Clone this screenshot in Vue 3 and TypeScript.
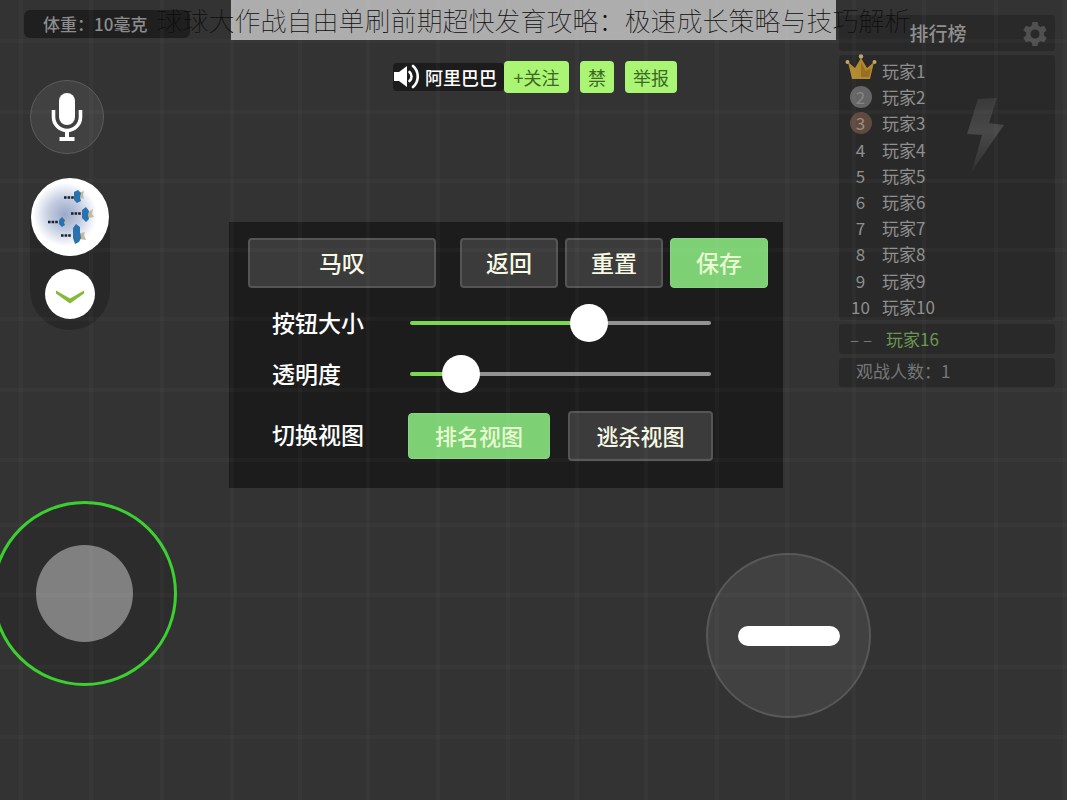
<script setup lang="ts">
import { ref } from 'vue'

interface Player {
  rank: number
  name: string
}

const verticalLines: number[] = [21, 91, 162, 232, 300, 368, 438, 508, 577, 646, 717, 787, 854, 924, 996, 1065]
const horizontalLines: number[] = [41, 112, 181, 250, 319, 390, 460, 525, 595, 667, 737]

const players: Player[] = Array.from({ length: 10 }, (_, i) => ({ rank: i + 1, name: `玩家${i + 1}` }))

const buttonSize = ref<number>(61)
const opacity = ref<number>(12)
const view = ref<'rank' | 'chase'>('rank')
</script>

<template>
  <div class="game">
    <svg class="grid-lines" aria-hidden="true">
      <line v-for="x in verticalLines" :key="`v${x}`" :x1="x" y1="0" :x2="x" y2="100%" />
      <line v-for="y in horizontalLines" :key="`h${y}`" x1="0" :y1="y" x2="100%" :y2="y" />
    </svg>

    <h1 class="title"><span>球球大作战自由单刷前期超快发育攻略：极速成长策略与技巧解析</span></h1>

    <div class="hud">
      <div class="left">
        <div class="weight">体重：10毫克</div>
        <button class="mic" type="button" aria-label="麦克风">
          <svg width="32" height="50" viewBox="0 0 32 50">
            <rect x="8" y="1" width="16" height="32" rx="8" fill="#fff" />
            <path d="M2.500 18v7a13.500 13.500 0 0 0 27 0v-7" fill="none" stroke="#fff" stroke-width="3.600" />
            <path d="M16 38v9M8.500 47h15" fill="none" stroke="#fff" stroke-width="4" />
          </svg>
        </button>
        <div class="skins">
          <button class="skin" type="button" aria-label="皮肤">
            <svg width="77" height="77" viewBox="0 0 77 77">
              <defs>
                <radialGradient id="haze" cx="0.44" cy="0.46" r="0.42">
                  <stop offset="0" stop-color="#9aa9c8" />
                  <stop offset="0.5" stop-color="#c3cce0" />
                  <stop offset="1" stop-color="#ffffff" />
                </radialGradient>
              </defs>
              <circle cx="38.500" cy="38.500" r="38" fill="url(#haze)" />
              <g fill="#c4b79a">
                <path d="M48 14l5-2-1 4 1 4-5-2zM56 34l6-4-1 5 2 3-6 1zM47 55l7-2-1 3 2 5-6-1zM33 40l3 3-3 3z" />
              </g>
              <g fill="#2873ae">
                <path d="M43 13l4-2 3 3-1 4 1 4-4 2-3-3zM51 31l4-3 3 4-1 4 1 4-3 3-4-4zM42 49l3-4 4 3v5l1 6-2 4-4 2-2-6zM28 41l3-3 3 3-1 3 1 2-3 2-3-3z" />
              </g>
              <g stroke="#16202e" stroke-width="2.600" stroke-dasharray="2.600 1" fill="none">
                <path d="M33 18.500h10M40 34.500h10M17 43h10M30 56.500h10" />
              </g>
            </svg>
          </button>
          <button class="more" type="button" aria-label="展开">
            <svg width="30" height="16" viewBox="0 0 30 16">
              <path d="M1 1.500l14 8L29 1.500v3L15 14.500 1 4.500z" fill="#86b936" />
            </svg>
          </button>
        </div>
      </div>

      <div class="center">
        <div class="voice">
          <div class="speaker">
            <svg width="26" height="26" viewBox="0 0 26 26">
              <path d="M1 8h5l8-6v21l-8-6H1z" fill="#fff" />
              <path d="M16.500 8a6 6 0 0 1 0 9M20 2a14 14 0 0 1 0 21" fill="none" stroke="#fff" stroke-width="2.600" stroke-linecap="round" />
            </svg>
            <span>阿里巴巴</span>
          </div>
          <button class="tag follow" type="button">+关注</button>
          <button class="tag" type="button">禁</button>
          <button class="tag" type="button">举报</button>
        </div>

        <section class="panel">
          <div class="actions">
            <button class="btn name" type="button">马叹</button>
            <button class="btn" type="button">返回</button>
            <button class="btn" type="button">重置</button>
            <button class="btn green" type="button">保存</button>
          </div>
          <div class="row">
            <label for="size">按钮大小</label>
            <input id="size" v-model.number="buttonSize" type="range" min="0" max="100" :style="{ '--fill': buttonSize + '%' }" />
          </div>
          <div class="row">
            <label for="opacity">透明度</label>
            <input id="opacity" v-model.number="opacity" type="range" min="0" max="100" :style="{ '--fill': opacity + '%' }" />
          </div>
          <div class="row views">
            <span class="label">切换视图</span>
            <div class="choices">
              <button class="btn view" :class="{ green: view === 'rank' }" type="button" @click="view = 'rank'">排名视图</button>
              <button class="btn view" :class="{ green: view === 'chase' }" type="button" @click="view = 'chase'">逃杀视图</button>
            </div>
          </div>
        </section>
      </div>

      <aside class="board">
        <header class="board-head">
          <h2>排行榜</h2>
          <button class="gear" type="button" aria-label="设置">
            <svg width="24" height="24" viewBox="-12 -12 24 24">
              <circle r="6.800" fill="none" stroke="#505050" stroke-width="4.500" />
              <g fill="#505050">
                <path v-for="a in [0, 60, 120, 180, 240, 300]" :key="a" d="M-3.500 -8l1-4h5l1 4z" :transform="`rotate(${a})`" />
              </g>
            </svg>
          </button>
        </header>
        <div class="board-list">
          <ol>
            <li v-for="p in players" :key="p.rank">
              <span class="rank">
                <svg v-if="p.rank === 1" class="crown" width="32" height="26" viewBox="0 0 32 26" role="img" aria-label="1">
                  <path d="M3 8l7 6 6-10 6 10 7-6-4 17H7z" fill="#b18a30" />
                  <path d="M16 8l5 9 5-3-2 9h-8z" fill="#987022" />
                  <g fill="#c0a66c">
                    <circle cx="2.500" cy="8" r="2" /><circle cx="16" cy="2.500" r="2.200" /><circle cx="29.500" cy="8" r="2" />
                  </g>
                </svg>
                <span v-else-if="p.rank < 4" class="medal" :class="`m${p.rank}`">{{ p.rank }}</span>
                <template v-else>{{ p.rank }}</template>
              </span>
              <span>{{ p.name }}</span>
            </li>
          </ol>
          <svg class="bolt" width="40" height="74" viewBox="0 0 40 74" aria-hidden="true">
            <defs>
              <linearGradient id="bolt" x1="0" y1="0" x2="0" y2="1">
                <stop offset="0" stop-color="#3a3a3a" />
                <stop offset="0.45" stop-color="#484848" />
                <stop offset="1" stop-color="#333" />
              </linearGradient>
            </defs>
            <path d="M12 1l19-1-8 25 15 2L6 73l10-36-15-1z" fill="url(#bolt)" />
          </svg>
        </div>
        <div class="self"><span class="dashes">– –</span><span>玩家16</span></div>
        <div class="watch">观战人数：1</div>
      </aside>
    </div>

    <div class="controls">
      <div class="stick"><div class="knob"></div></div>
      <button class="split" type="button" aria-label="吐球"><i></i></button>
    </div>
  </div>
</template>

<style>
body {
  margin: 0;
  background: #333;
}
</style>

<style scoped>
.game {
  position: relative;
  display: flex;
  flex-direction: column;
  justify-content: space-between;
  min-height: 100vh;
  overflow: hidden;
  background: #333;
  color: #fff;
  font-family: "Noto Sans CJK SC", sans-serif;
}
button {
  margin: 0;
  padding: 0;
  border: 0;
  font: inherit;
  color: inherit;
  background: none;
  cursor: pointer;
}
svg {
  display: block;
}
.grid-lines {
  position: absolute;
  inset: 0;
  z-index: 2;
  width: 100%;
  height: 100%;
  pointer-events: none;
}
.grid-lines line {
  stroke: #fff;
  stroke-opacity: 0.024;
  stroke-width: 4;
}
.title {
  position: absolute;
  z-index: 3;
  top: 0;
  left: 0;
  right: 0;
  display: flex;
  justify-content: center;
  width: 605px;
  height: 40px;
  margin: 0 auto;
  background: rgba(255, 255, 255, 0.6);
  color: #0c0c0c;
  font-size: 26px;
  font-weight: 100;
  line-height: 40px;
  white-space: nowrap;
}
.hud {
  display: grid;
  grid-template-columns: 229px minmax(0, 1fr) 284px;
  align-items: start;
}

.left {
  display: flex;
  flex-direction: column;
  align-items: flex-start;
  padding: 10px 0 0 30px;
}
.weight {
  box-sizing: border-box;
  width: 166px;
  margin-left: -6px;
  padding-left: 19px;
  border-radius: 6px;
  background: #1f1f1f;
  color: #8c8c8c;
  font-size: 17px;
  font-weight: 500;
  line-height: 28px;
}
.mic {
  box-sizing: border-box;
  display: flex;
  align-items: center;
  justify-content: center;
  width: 74px;
  height: 74px;
  margin-top: 42px;
  border: 1px solid #5c5c5c;
  border-radius: 50%;
  background: #414141;
}
.skins {
  display: flex;
  flex-direction: column;
  align-items: center;
  gap: 13px;
  width: 80px;
  margin-top: 24px;
  padding-bottom: 11px;
  border-radius: 40px;
  background: #282828;
}
.skin {
  width: 78px;
  height: 78px;
  border-radius: 50%;
  background: #fff;
  overflow: hidden;
}
.more {
  display: flex;
  align-items: center;
  justify-content: center;
  width: 50px;
  height: 50px;
  padding-top: 6px;
  box-sizing: border-box;
  border-radius: 50%;
  background: #fff;
}

.center {
  padding-top: 61px;
}
.voice {
  display: flex;
  align-items: center;
  padding-left: 164px;
}
.speaker {
  display: flex;
  align-items: center;
  gap: 6px;
  width: 111px;
  height: 28px;
  border-radius: 4px;
  background: #1c1c1c;
  font-size: 18px;
  font-weight: 500;
  line-height: 26px;
  white-space: nowrap;
}
.tag {
  min-width: 34px;
  height: 32px;
  margin-right: 11px;
  padding: 0 8px;
  border-radius: 4px;
  background: #abf575;
  color: #3c6824;
  font-size: 18px;
  line-height: 32px;
  white-space: nowrap;
}
.follow {
  min-width: 65px;
}
.panel {
  display: grid;
  margin-top: 129px;
  padding: 16px 15px 27px 19px;
  background: #1c1c1c;
}
.actions {
  display: grid;
  grid-template-columns: 205fr 98fr 98fr 98fr;
  gap: 7px;
}
.name {
  margin-right: 17px;
}
.btn {
  box-sizing: border-box;
  height: 50px;
  padding-bottom: 2px;
  border: 2px solid #555;
  border-radius: 4px;
  background: #3b3b3b;
  color: #f7f9e4;
  font-size: 23px;
  font-weight: 500;
  line-height: 44px;
  white-space: nowrap;
}
.green {
  border: 1px solid #8ad583;
  background: #7dd074;
  color: #e8fbd2;
}
.row {
  display: grid;
  grid-template-columns: 138px minmax(0, 1fr);
  align-items: center;
  margin: 16px 55px 0 24px;
  font-size: 23px;
  font-weight: 500;
  line-height: 34px;
}
.row label {
  padding-bottom: 2px;
}
.label {
  padding-bottom: 4px;
}
.row + .row {
  margin-top: 13px;
}
.row + .views {
  grid-template-columns: 136px minmax(0, 1fr);
  margin-top: 18px;
}
.choices {
  display: grid;
  grid-template-columns: 142fr 145fr;
  gap: 18px;
  align-items: center;
}
.view {
  font-size: 22px;
}
.view.green {
  height: 46px;
  line-height: 42px;
}
input[type="range"] {
  appearance: none;
  width: 301px;
  max-width: 100%;
  height: 38px;
  margin: 0;
  background: none;
}
input[type="range"]::-webkit-slider-runnable-track {
  height: 4px;
  border-radius: 2px;
  background: linear-gradient(to right, #7cd850 var(--fill), #939393 var(--fill));
}
input[type="range"]::-webkit-slider-thumb {
  appearance: none;
  width: 38px;
  height: 38px;
  margin-top: -17px;
  border-radius: 50%;
  background: #fff;
}

.board {
  display: grid;
  gap: 4px;
  padding: 15px 12px 0 56px;
  color: #8f8f8f;
  font-size: 17px;
}
.board-head,
.board-list,
.self,
.watch {
  border-radius: 4px;
  background: #292929;
}
.board-head {
  position: relative;
  height: 36px;
}
.board-head h2 {
  margin: 0;
  padding-right: 18px;
  font-size: 19px;
  font-weight: 500;
  line-height: 36px;
  text-align: center;
}
.gear {
  position: absolute;
  top: 7px;
  right: 8px;
}
.board-list {
  position: relative;
  padding-top: 3px;
}
ol {
  display: grid;
  grid-template-rows: repeat(10, minmax(0, 1fr));
  height: 262px;
  margin: 0;
  padding: 0;
  list-style: none;
}
li {
  display: flex;
  align-items: center;
  line-height: 26px;
}
.rank {
  display: flex;
  justify-content: center;
  width: 43px;
}
.crown {
  margin-bottom: 8px;
}
.medal {
  width: 22px;
  height: 22px;
  border-radius: 50%;
  line-height: 22px;
  text-align: center;
}
.m2 {
  background: #656565;
  color: #858585;
}
.m3 {
  background: #5f4a40;
  color: #a08c80;
}
.bolt {
  position: absolute;
  top: 43px;
  right: 49px;
}
.self {
  display: flex;
  gap: 12px;
  padding-left: 11px;
  color: #6a9850;
  line-height: 30px;
}
.dashes {
  width: 24px;
  color: #777;
  white-space: nowrap;
}
.watch {
  padding: 0 0 4px 17px;
  color: #777;
  line-height: 25px;
}

.controls {
  display: flex;
  align-items: flex-start;
  justify-content: space-between;
  padding: 0 196px 82px 0;
}
.stick {
  box-sizing: border-box;
  display: flex;
  align-items: center;
  justify-content: center;
  width: 185px;
  height: 185px;
  margin: 0 0 0 -8px;
  border: 3px solid #3bd02f;
  border-radius: 50%;
  background: #2c2c2c;
}
.knob {
  width: 97px;
  height: 97px;
  border-radius: 50%;
  background: #808080;
}
.split {
  box-sizing: border-box;
  display: flex;
  align-items: center;
  justify-content: center;
  width: 165px;
  height: 165px;
  margin-top: 52px;
  border: 2px solid #585858;
  border-radius: 50%;
  background: #414141;
}
.split i {
  width: 102px;
  height: 20px;
  border-radius: 10px;
  background: #fff;
}
</style>
